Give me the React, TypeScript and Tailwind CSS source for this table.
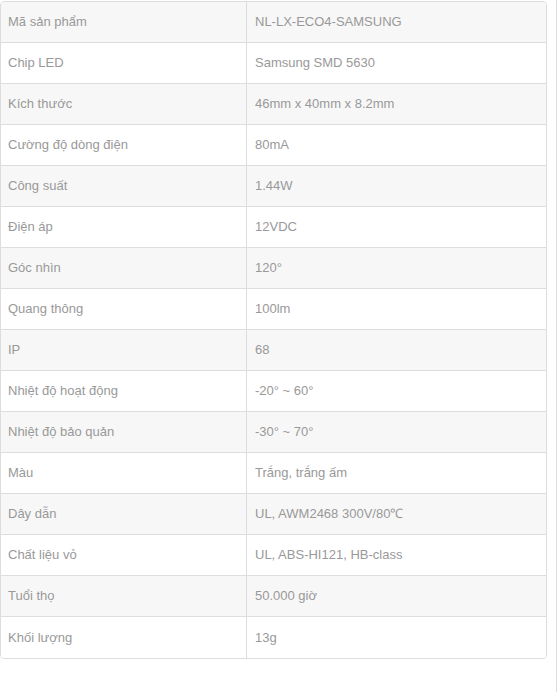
import React from "react";

const rows: [string, string][] = [
  ["Mã sản phẩm", "NL-LX-ECO4-SAMSUNG"],
  ["Chip LED", "Samsung SMD 5630"],
  ["Kích thước", "46mm x 40mm x 8.2mm"],
  ["Cường độ dòng điện", "80mA"],
  ["Công suất", "1.44W"],
  ["Điện áp", "12VDC"],
  ["Góc nhìn", "120°"],
  ["Quang thông", "100lm"],
  ["IP", "68"],
  ["Nhiệt độ hoạt động", "-20° ~ 60°"],
  ["Nhiệt độ bảo quản", "-30° ~ 70°"],
  ["Màu", "Trắng, trắng ấm"],
  ["Dây dẫn", "UL, AWM2468 300V/80℃"],
  ["Chất liệu vỏ", "UL, ABS-HI121, HB-class"],
  ["Tuổi thọ", "50.000 giờ"],
  ["Khối lượng", "13g"],
];

export default function App() {
  return (
    <div
      className="w-[557px] h-[692px] border-r border-[#dddddd] bg-white pt-px"
      style={{ fontFamily: '"Liberation Sans", Arial, sans-serif' }}
    >
      <div className="w-[547px] border border-[#dddddd] rounded-[4px] overflow-hidden">
        {rows.map(([k, v], i) => (
          <div
            key={k}
            className={`grid grid-cols-[246px_1fr] h-[41px] ${i < rows.length - 1 ? "border-b border-[#dddddd]" : "h-[40px]"} ${i % 2 === 0 ? "bg-[#f7f7f7]" : "bg-white"}`}
          >
            <div className="flex items-center pl-[7px] border-r border-[#dddddd] text-[13px] text-[#999999]">
              {k}
            </div>
            <div className="flex items-center pl-[8px] text-[13px] text-[#999999]">{v}</div>
          </div>
        ))}
      </div>
    </div>
  );
}
